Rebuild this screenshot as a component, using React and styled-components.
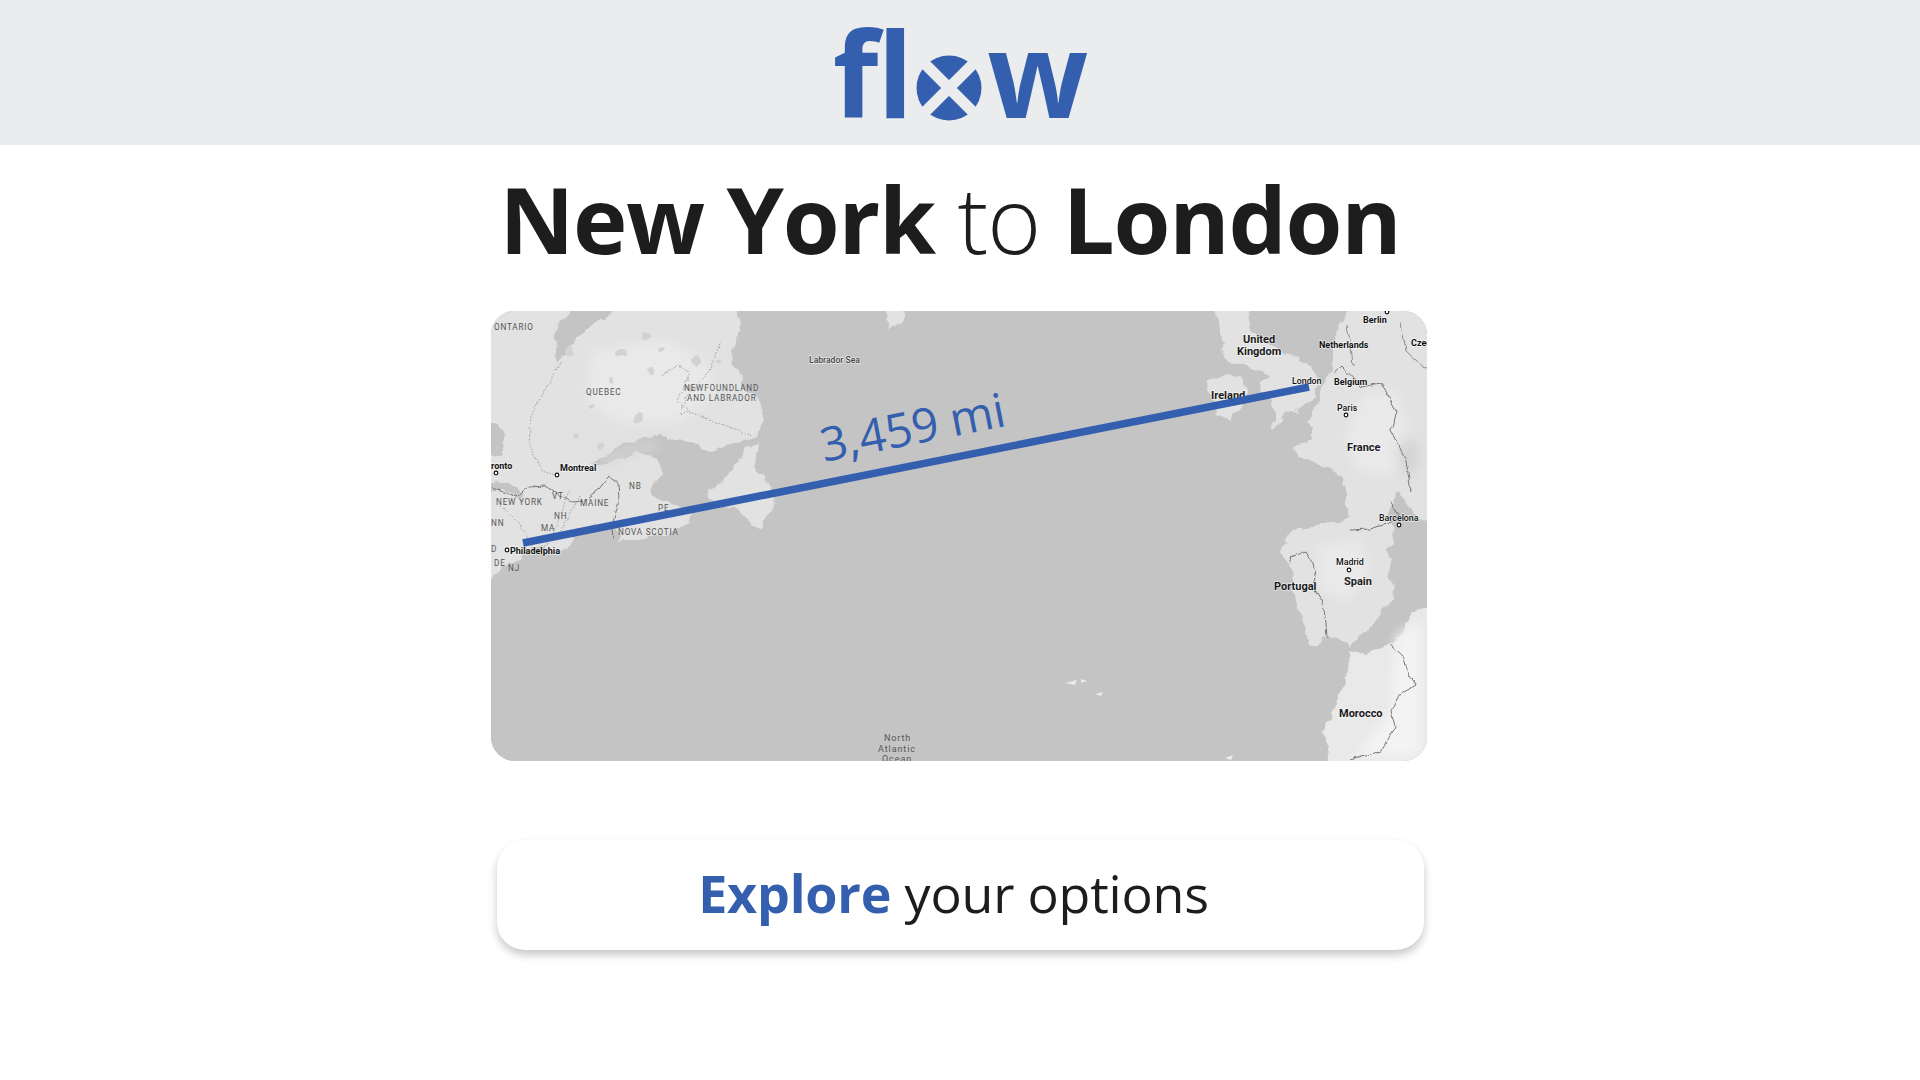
import styled, { createGlobalStyle } from "styled-components";

const BLUE = "#345fae";
const INK = "#1d1d1d";
const WATER = "#c4c4c4";
const LAND = "#e2e2e2";
const LAND_LIGHT = "#e9e9e9";

const GlobalStyle = createGlobalStyle`
  html, body {
    margin: 0;
    padding: 0;
    background: #fff;
    font-family: "Open Sans", "Noto Sans", sans-serif;
  }
`;

const Page = styled.div`
  display: flex;
  flex-direction: column;
  align-items: center;
  min-height: 1080px;
`;

const Header = styled.header`
  width: 100%;
  height: 145px;
  background: #eaecee;
  display: flex;
  justify-content: center;
  align-items: flex-start;
`;

const Logo = styled.div`
  display: flex;
  align-items: flex-start;
  height: 145px;
  color: ${BLUE};
  font-size: 118px;
  font-weight: 700;
  line-height: 145px;
  letter-spacing: -1px;
`;

const Disc = styled.svg`
  width: 66px;
  height: 66px;
  margin: 55px 5px 0 4px;
  flex: none;
`;

const Title = styled.h1`
  margin: 21px 20px 0 0;
  height: 106px;
  font-size: 92px;
  line-height: 106px;
  font-weight: 700;
  color: ${INK};
  letter-spacing: -1.2px;
  white-space: nowrap;
`;

const Thin = styled.span`
  font-weight: 300;
`;

const MapFrame = styled.div`
  width: 936px;
  height: 450px;
  margin-top: 39px;
  margin-left: -2px;
  border-radius: 24px;
  overflow: hidden;
  background: ${WATER};
  flex: none;

  svg {
    display: block;
  }
`;

const ExploreButton = styled.button`
  width: 927px;
  height: 110px;
  margin-top: 79px;
  padding: 0 13px 5px 0;
  border: 0;
  border-radius: 28px;
  background: #fff;
  box-shadow: 0 5px 8px rgba(0, 0, 0, 0.22);
  font-family: inherit;
  font-size: 52px;
  color: ${INK};
  letter-spacing: -0.2px;
  cursor: pointer;
`;

const Strong = styled.span`
  color: ${BLUE};
  font-weight: 700;
`;

const labels = [
  { x: 3, y: 19, t: "ONTARIO", k: "region" },
  { x: 95, y: 84, t: "QUEBEC", k: "region" },
  { x: 193, y: 80, t: "NEWFOUNDLAND", k: "region" },
  { x: 196, y: 90, t: "AND LABRADOR", k: "region" },
  { x: 318, y: 52, t: "Labrador Sea", k: "sea" },
  { x: 0, y: 158, t: "ronto", k: "city" },
  { x: 69, y: 160, t: "Montreal", k: "city" },
  { x: 138, y: 178, t: "NB", k: "region" },
  { x: 5, y: 194, t: "NEW YORK", k: "region" },
  { x: 61, y: 188, t: "VT", k: "region" },
  { x: 89, y: 195, t: "MAINE", k: "region" },
  { x: 63, y: 208, t: "NH", k: "region" },
  { x: 50, y: 220, t: "MA", k: "region" },
  { x: 167, y: 200, t: "PE", k: "region" },
  { x: 127, y: 224, t: "NOVA SCOTIA", k: "region" },
  { x: 0, y: 215, t: "NN", k: "region" },
  { x: 0, y: 241, t: "D", k: "region" },
  { x: 3, y: 255, t: "DE", k: "region" },
  { x: 17, y: 260, t: "NJ", k: "region" },
  { x: 19, y: 243, t: "Philadelphia", k: "city" },
  { x: 752, y: 32, t: "United", k: "country" },
  { x: 746, y: 44, t: "Kingdom", k: "country" },
  { x: 720, y: 88, t: "Ireland", k: "country" },
  { x: 872, y: 12, t: "Berlin", k: "city" },
  { x: 828, y: 37, t: "Netherlands", k: "city" },
  { x: 920, y: 35, t: "Czech", k: "city" },
  { x: 801, y: 73, t: "London", k: "small" },
  { x: 843, y: 74, t: "Belgium", k: "city" },
  { x: 846, y: 100, t: "Paris", k: "small" },
  { x: 856, y: 140, t: "France", k: "country" },
  { x: 888, y: 210, t: "Barcelona", k: "small" },
  { x: 845, y: 254, t: "Madrid", k: "small" },
  { x: 853, y: 274, t: "Spain", k: "country" },
  { x: 783, y: 279, t: "Portugal", k: "country" },
  { x: 848, y: 406, t: "Morocco", k: "country" },
  { x: 393, y: 430, t: "North", k: "ocean" },
  { x: 387, y: 441, t: "Atlantic", k: "ocean" },
  { x: 391, y: 451, t: "Ocean", k: "ocean" },
];

const labelStyles = {
  region: { size: 8.2, weight: 400, fill: "#565656", spacing: 0.8 },
  sea: { size: 8.6, weight: 500, fill: "#444", spacing: 0 },
  ocean: { size: 9, weight: 400, fill: "#565656", spacing: 0.9 },
  city: { size: 9, weight: 700, fill: "#111", spacing: 0 },
  small: { size: 8.8, weight: 500, fill: "#111", spacing: 0 },
  country: { size: 11, weight: 700, fill: "#1a1a1a", spacing: 0 },
};

const cities = [
  [66, 164],
  [5, 162],
  [16, 239],
  [855, 104],
  [908, 214],
  [858, 259],
  [896, 1],
];

const lakes = [
  [155, 25, 5, 3], [170, 38, 3, 2], [130, 42, 6, 3], [160, 60, 3, 4], [205, 50, 5, 6],
  [110, 135, 3, 3], [100, 95, 3, 2], [148, 107, 5, 5], [78, 40, 4, 6], [228, 50, 3, 2],
  [120, 70, 2, 3], [200, 77, 6, 3], [85, 125, 3, 2],
];

const MapLabel = ({ x, y, t, k }) => {
  const st = labelStyles[k];
  return (
    <text
      x={x}
      y={y}
      fontFamily="Roboto, sans-serif"
      fontSize={st.size}
      fontWeight={st.weight}
      fill={st.fill}
      letterSpacing={st.spacing}
      stroke={k === "region" || k === "ocean" ? "none" : "#ffffff"}
      strokeOpacity="0.6"
      strokeWidth="1.4"
      paintOrder="stroke"
    >
      {t}
    </text>
  );
};

const AtlanticMap = () => (
  <svg width="937" height="450" viewBox="0 0 937 450">
    <defs>
      <filter id="coast" filterUnits="userSpaceOnUse" x="-40" y="-40" width="1020" height="530" colorInterpolationFilters="sRGB">
        <feTurbulence type="fractalNoise" baseFrequency="0.07" numOctaves="3" seed="4" result="n" />
        <feDisplacementMap in="SourceGraphic" in2="n" scale="11" xChannelSelector="R" yChannelSelector="G" />
      </filter>
      <filter id="wobble" filterUnits="userSpaceOnUse" x="-40" y="-40" width="1020" height="530" colorInterpolationFilters="sRGB">
        <feTurbulence type="fractalNoise" baseFrequency="0.12" numOctaves="2" seed="9" result="n" />
        <feDisplacementMap in="SourceGraphic" in2="n" scale="5" xChannelSelector="G" yChannelSelector="R" />
      </filter>
      <filter id="relief" filterUnits="userSpaceOnUse" x="-40" y="-40" width="1020" height="530" colorInterpolationFilters="sRGB">
        <feGaussianBlur stdDeviation="6" />
      </filter>
    </defs>

    <rect width="937" height="450" fill={WATER} />

    <g filter="url(#coast)">
      {/* north america */}
      <path
        fill={LAND}
        d="M-20 -20 L77 -20 L77 0 L61 26 L69 49 L86 26 L121 0 L121 -20 L245 -20 L247 22 L240 46 L252 72 L269 92 L274 106 L266 122 L256 129 L222 141 L196 132 L162 124 L132 134 L100 152 L112 153 L145 141 L165 148 L172 160 L159 176 L170 190 L190 196 L202 201 L200 212 L176 222 L148 229 L129 229 L126 216 L105 214 L89 219 L79 236 L69 240 L45 236 L32 240 L28 250 L9 256 L0 269 L-20 280 Z"
      />
      <path fill={WATER} d="M-20 109 L8 112 L13 130 L10 146 L-20 142 Z" />
      <path fill={WATER} d="M-20 170 L14 172 L26 178 L34 186 L24 188 L10 180 L-20 182 Z" />
      <path fill={WATER} d="M176 137 L192 147 L198 157 L188 153 L178 145 Z" />

      {/* newfoundland */}
      <path
        fill={LAND}
        d="M269 132 L256 136 L236 166 L216 182 L222 192 L246 196 L249 202 L269 219 L284 196 L282 179 L266 156 Z"
      />
      <path fill={LAND} d="M388 -20 L414 -20 L410 14 L398 16 Z" />

      {/* british isles */}
      <path fill={LAND} d="M717 69 L732 62 L754 69 L755 89 L739 109 L726 102 L724 88 L716 78 Z" />
      <path
        fill={LAND}
        d="M714 -20 L755 -20 L760 16 L772 32 L798 42 L818 52 L831 72 L821 89 L796 102 L782 119 L784 100 L768 72 L778 62 L750 52 L729 48 L732 22 Z"
      />

      {/* europe */}
      <path
        fill={LAND}
        d="M856 -20 L856 0 L842 32 L842 56 L832 76 L827 96 L816 109 L822 126 L801 139 L816 149 L846 159 L856 176 L856 196 L859 206 L836 212 L802 219 L789 242 L799 254 L807 292 L819 334 L836 326 L849 327 L862 336 L902 289 L897 239 L906 219 L895 204 L907 182 L925 205 L957 215 L957 -20 Z"
      />

      {/* morocco */}
      <path
        fill={LAND_LIGHT}
        d="M859 339 L874 343 L902 332 L922 302 L957 284 L957 470 L837 470 L832 419 L846 392 L856 366 Z"
      />
    </g>

    {/* soft relief */}
    <g filter="url(#relief)">
      <path fill={LAND_LIGHT} d="M100 40 L175 28 L215 50 L225 80 L190 110 L130 112 L95 90 Z" />
      <path fill="#d8d8d8" d="M105 150 L135 138 L160 130 L170 136 L150 140 L115 154 Z" />
      <path fill={LAND_LIGHT} d="M870 85 L905 78 L918 120 L900 165 L865 160 L855 125 Z" />
      <path fill={LAND_LIGHT} d="M825 235 L870 228 L880 262 L855 290 L830 280 Z" />
      <path fill="#f3f3f3" d="M905 325 L930 310 L930 445 L865 445 L900 400 Z" />
      <path fill="#d4d4d4" d="M905 135 L922 125 L930 145 L922 165 L912 160 Z" />
    </g>

    {lakes.map(([x, y, rx, ry]) => (
      <ellipse key={`${x}-${y}`} cx={x} cy={y} rx={rx} ry={ry} fill="#d2d2d2" filter="url(#wobble)" />
    ))}

    <path fill="#ececec" d="M574 372 L586 369 L584 374 Z M590 368 L596 370 L590 372 Z M604 383 L612 381 L610 385 Z" />
    <path fill="#ececec" d="M734 447 L742 444 L740 449 Z" />

    <g fill="none" filter="url(#wobble)">
      <g stroke="#6a6a6a" strokeWidth="0.9">
        <path d="M0 177 L14 181 L26 186 L38 176 L54 175 L80 191 L92 190 L108 178 L118 165 L127 172 L128 190 L121 215 L122 228" />
        <path d="M800 253 L798 246 L805 244 L815 241 L822 252 L824 263 L823 278 L832 293 L835 312 L836 327" />
        <path d="M899 333 L912 345 L918 365 L925 374 L908 384 L900 400 L904 415 L890 440 L860 449" />
        <path d="M859 219 L878 218 L900 212 L908 205 L900 190" />
        <path d="M842 62 L850 55 L870 76 L890 72 L905 100 L900 120 L915 150 L920 180" />
        <path d="M856 15 L860 35 L862 55 M910 12 L915 40 L937 60" strokeWidth="0.7" />
      </g>
      <g stroke="#8f8f8f" strokeWidth="0.8" strokeDasharray="1.5 1.5">
        <path d="M70 50 L40 105 L38 135 L52 160 L68 165" />
        <path d="M230 30 L218 60 L195 85 L188 105 L196 100 L262 125" />
        <path d="M170 65 L186 55 L200 60 L186 90 L200 100" />
        <path d="M78 180 L62 225 L52 240 M88 185 L68 225 M30 215 L44 240 M10 195 L30 215" />
      </g>
    </g>

    {cities.map(([x, y]) => (
      <circle key={x} cx={x} cy={y} r="1.8" fill="#fff" stroke="#111" strokeWidth="1.2" />
    ))}

    {labels.map((l) => (
      <MapLabel key={l.t + l.x} {...l} />
    ))}

    <line x1="32" y1="232" x2="818" y2="76" stroke={BLUE} strokeWidth="7.5" />
    <text
      x="333"
      y="151"
      transform="rotate(-11.2 333 151)"
      fontFamily="'Open Sans', sans-serif"
      fontSize="47"
      fill={BLUE}
    >
      3,459 mi
    </text>
  </svg>
);

const App = () => (
  <Page>
    <GlobalStyle />
    <Header>
      <Logo>
        fl
        <Disc viewBox="0 0 66 66">
          <circle cx="33" cy="33" r="32.5" fill={BLUE} />
          <path d="M8 8 L58 58 M58 8 L8 58" stroke="#eaecee" strokeWidth="11" />
        </Disc>
        w
      </Logo>
    </Header>
    <Title>
      New York <Thin>to</Thin> London
    </Title>
    <MapFrame>
      <AtlanticMap />
    </MapFrame>
    <ExploreButton>
      <Strong>Explore</Strong> your options
    </ExploreButton>
  </Page>
);

export default App;
